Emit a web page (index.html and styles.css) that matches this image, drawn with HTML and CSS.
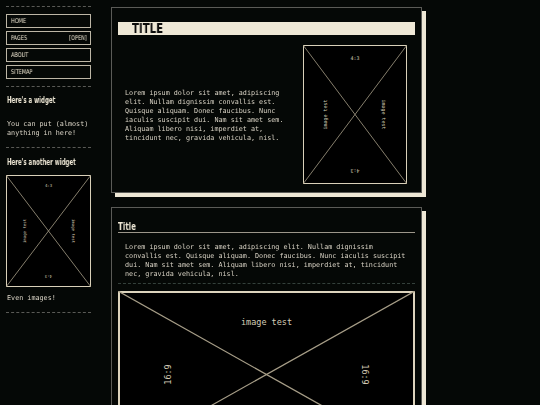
FILE: index.html
```html
<!DOCTYPE html>
<html lang="en">
<head>
<meta charset="utf-8">
<title>Widgets</title>
<link rel="stylesheet" href="styles.css">
</head>
<body>
<div class="layout">
  <aside class="sidebar">
    <hr class="dash">
    <nav class="nav">
      <a class="nav-item" href="#"><span class="cond">HOME</span></a>
      <a class="nav-item" href="#"><span class="cond">PAGES</span><span class="cond cond-r">[OPEN]</span></a>
      <a class="nav-item" href="#"><span class="cond">ABOUT</span></a>
      <a class="nav-item" href="#"><span class="cond">SITEMAP</span></a>
    </nav>
    <hr class="dash">
    <section class="widget">
      <h3 class="widget-title"><span class="cond">Here's a widget</span></h3>
      <p class="widget-text">You can put (almost) anything in here!</p>
    </section>
    <hr class="dash">
    <section class="widget">
      <h3 class="widget-title"><span class="cond">Here's another widget</span></h3>
      <svg class="ph ph-side" width="85" height="112" viewBox="0 0 85 112">
        <rect class="ph-frame" x="0.5" y="0.5" width="84" height="111"/>
        <line class="ph-diag" x1="0" y1="0" x2="85" y2="112"/>
        <line class="ph-diag" x1="85" y1="0" x2="0" y2="112"/>
        <text transform="translate(42.5 10)">4:3</text>
        <text transform="translate(42.5 101) rotate(180)">4:3</text>
        <text transform="translate(18 56) rotate(-90)">image test</text>
        <text transform="translate(67 56) rotate(90)">image test</text>
      </svg>
      <p class="widget-text widget-caption">Even images!</p>
    </section>
    <hr class="dash">
  </aside>

  <main class="main">
    <article class="card card-feature">
      <h1 class="title-bar"><span class="cond">TITLE</span></h1>
      <div class="feature">
        <p class="body-text">Lorem ipsum dolor sit amet, adipiscing elit. Nullam dignissim convallis est. Quisque aliquam. Donec faucibus. Nunc iaculis suscipit dui. Nam sit amet sem. Aliquam libero nisi, imperdiet at, tincidunt nec, gravida vehicula, nisl.</p>
        <svg class="ph ph-card" width="104" height="139" viewBox="0 0 104 139">
          <rect class="ph-frame" x="0.5" y="0.5" width="103" height="138"/>
          <line class="ph-diag" x1="0" y1="0" x2="104" y2="139"/>
          <line class="ph-diag" x1="104" y1="0" x2="0" y2="139"/>
          <text transform="translate(52 13)">4:3</text>
          <text transform="translate(52 126) rotate(180)">4:3</text>
          <text transform="translate(22 69.5) rotate(-90)">image test</text>
          <text transform="translate(81 69.5) rotate(90)">image test</text>
        </svg>
      </div>
    </article>

    <article class="card card-post">
      <h2 class="post-title"><span class="cond">Title</span></h2>
      <p class="body-text post-text">Lorem ipsum dolor sit amet, adipiscing elit. Nullam dignissim convallis est. Quisque aliquam. Donec faucibus. Nunc iaculis suscipit dui. Nam sit amet sem. Aliquam libero nisi, imperdiet at, tincidunt nec, gravida vehicula, nisl.</p>
      <hr class="dash dash-card">
      <svg class="ph ph-wide" width="297" height="167" viewBox="0 0 297 167">
        <rect class="ph-frame ph-frame-thick" x="1" y="1" width="295" height="165"/>
        <line class="ph-diag ph-diag-thick" x1="0" y1="0" x2="297" y2="167"/>
        <line class="ph-diag ph-diag-thick" x1="297" y1="0" x2="0" y2="167"/>
        <text transform="translate(148.5 31)">image test</text>
        <text transform="translate(148.5 136) rotate(180)">image test</text>
        <text transform="translate(50 83.5) rotate(-90)">16:9</text>
        <text transform="translate(247 83.5) rotate(90)">16:9</text>
      </svg>
    </article>
  </main>
</div>
</body>
</html>
```

FILE: styles.css
```css
* {
  box-sizing: border-box;
  margin: 0;
  padding: 0;
}

html {
  background: #050806;
  overflow: hidden;
}

body {
  padding: 6px;
  font-family: "DejaVu Sans Mono", "Liberation Mono", monospace;
  font-size: 6.75px;
  line-height: 9px;
  color: #dcd6c8;
  -webkit-font-smoothing: antialiased;
}

.layout {
  display: grid;
  grid-template-columns: 85px 311px;
  column-gap: 20px;
  align-items: start;
}

.dash {
  border: 0;
  border-top: 1px dashed #5a5a56;
  height: 0;
}

/* condensed label text */
.cond {
  display: inline-block;
  white-space: nowrap;
  transform-origin: 0 50%;
  will-change: transform;
}

.cond-r {
  transform-origin: 100% 50%;
}

/* ---------- sidebar ---------- */
.nav {
  display: flex;
  flex-direction: column;
  gap: 3px;
  margin: 7px 0;
}

.nav-item {
  display: flex;
  justify-content: space-between;
  align-items: center;
  height: 14px;
  padding: 0 3px 0 4px;
  border: 1px solid #bdb6a6;
  font-family: "DejaVu Sans", sans-serif;
  font-stretch: condensed;
  font-size: 6.5px;
  line-height: 8px;
  color: #ebe3cf;
  text-decoration: none;
}

.nav-item .cond {
  transform: scaleX(0.85);
}

.widget {
  padding: 9px 0 9.5px 1px;
}

.widget + .dash + .widget {
  padding-top: 10px;
}

.widget-title {
  font-family: "DejaVu Sans", sans-serif;
  font-stretch: condensed;
  font-weight: bold;
  font-size: 8px;
  line-height: 10px;
  color: #efe8d6;
}

.widget-title .cond {
  transform: scaleX(0.76);
}

.widget-text {
  margin-top: 13.5px;
  will-change: transform;
}

.ph {
  display: block;
}

.ph-side {
  margin: 7px 0 0 -1px;
}

.widget-caption {
  margin-top: 6.5px;
}

.ph-frame {
  fill: #000;
  stroke: #d9d0b9;
  stroke-width: 1;
}

.ph-frame-thick {
  stroke: #ddd4bd;
  stroke-width: 2;
}

.ph-diag {
  stroke: #a79e88;
  stroke-width: 0.8;
}

.ph-diag-thick {
  stroke-width: 1.2;
}

.ph text {
  font-family: "DejaVu Sans Mono", monospace;
  fill: #d6cdb7;
  text-anchor: middle;
  dominant-baseline: central;
}

.ph-side text {
  font-size: 4px;
}

.ph-card text {
  font-size: 5px;
}

.ph-wide text {
  font-size: 8.5px;
}

/* ---------- main ---------- */
.main {
  display: flex;
  flex-direction: column;
  gap: 14px;
  padding-top: 1px;
}

.card {
  border: 1px solid #5b5b57;
  background: #050806;
  box-shadow: 4px 4px 0 #eee7d5;
  padding: 14px 6px 8px;
}

.title-bar {
  height: 13px;
  background: #efe8d6;
  color: #0c0c0b;
  padding-left: 14px;
  font-family: "DejaVu Sans", sans-serif;
  font-stretch: condensed;
  font-weight: bold;
  font-size: 13.5px;
  line-height: 13px;
}

.title-bar .cond {
  transform: scaleX(0.84);
}

.feature {
  display: flex;
  align-items: center;
  gap: 12px;
  margin-top: 10px;
  padding: 0 8px 0 7px;
}

.feature .body-text {
  flex: 1;
  padding-top: 3px;
}

.body-text {
  color: #d8d2c4;
  will-change: transform;
}

.card-post {
  padding: 13px 6px 0;
}

.post-title {
  font-family: "DejaVu Sans", sans-serif;
  font-stretch: condensed;
  font-weight: bold;
  font-size: 11px;
  line-height: 11px;
  color: #efe8d6;
  border-bottom: 1px solid #9c968a;
}

.post-title .cond {
  transform: scaleX(0.72);
}

.post-text {
  margin-top: 9.5px;
  padding: 0 7px;
}

.dash-card {
  margin-top: 4.5px;
  border-top-color: #34403b;
}

.ph-wide {
  margin-top: 7px;
}
```
